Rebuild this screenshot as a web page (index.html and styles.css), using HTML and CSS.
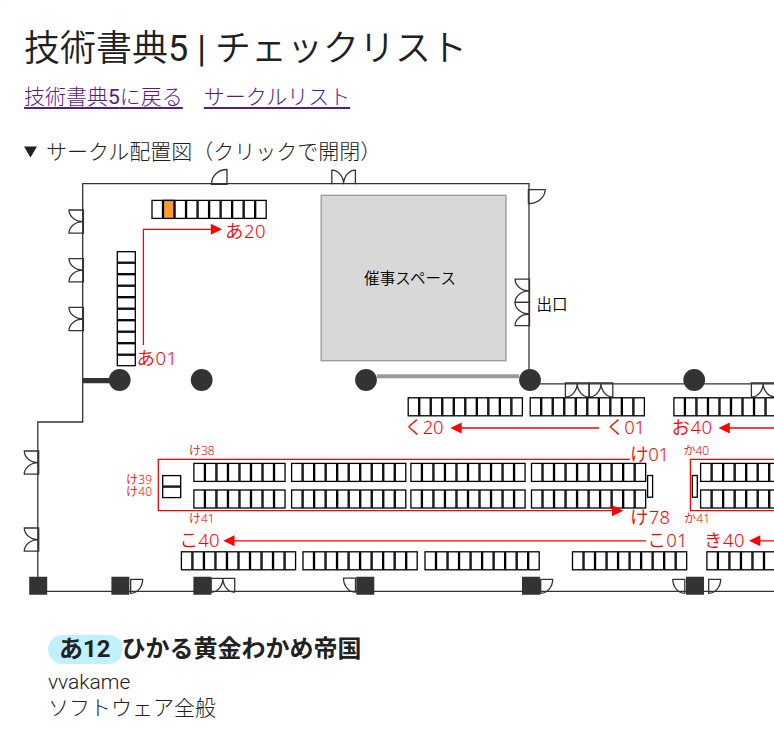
FILE: index.html
```
<!DOCTYPE html>
<html lang="ja">
<head>
<meta charset="utf-8">
<title>技術書典5 | チェックリスト</title>
<link rel="stylesheet" href="styles.css">
</head>
<body>
<main class="card">
<h1 class="title"><span class="demi">技術書典</span>5 | <span class="demi">チェックリスト</span></h1>
<nav class="links"><a href="#back"><span class="thin">技術書典</span>5<span class="thin">に戻る</span></a><a class="thin" href="#list">サークルリスト</a></nav>
<details class="map" open>
<summary><svg class="marker" viewBox="0 0 14 12"><path d="M0 0H14L7 12Z"/></svg><span class="thin">サークル配置図（クリックで開閉）</span></summary>
<svg class="plan" viewBox="0 165 774 435" width="774" height="435">
<defs>
<rect id="c" width="10.5" height="18"/>
<g id="r8"><use href="#c"/><use href="#c" x="11.52"/><use href="#c" x="23.04"/><use href="#c" x="34.56"/><use href="#c" x="46.08"/><use href="#c" x="57.6"/><use href="#c" x="69.12"/><use href="#c" x="80.64"/></g>
<g id="r"><use href="#r8"/><use href="#c" x="92.16"/><use href="#c" x="103.68"/></g>
<rect id="h" width="18" height="10.5"/>
<g id="sideDoor"><path d="M14.4 0H0A14.2 11.6 0 0 0 14.2 11.6A14.2 11.6 0 0 0 0 23.2H14.4Z"/></g>
<path id="hangDoor" d="M0 14V0H23.6V14M11.8 0A11.8 14 0 0 1 0 14M11.8 0A11.8 14 0 0 0 23.6 14"/>
<path id="doorR" d="M0 0H12A12 14 0 0 1 0 14Z"/>
<path id="doorL" d="M12 0H0A12 14 0 0 0 12 14Z"/>
</defs>
<rect class="stage" x="321.2" y="195.3" width="184.8" height="165.4"/>
<g class="wall">
<path d="M529 380V183.7H82.7V422H37.8V591.3H780M530 383.8H780"/>
<use href="#sideDoor" x="69" y="210"/><use href="#sideDoor" x="69" y="258.6"/><use href="#sideDoor" x="69" y="307.4"/>
<use href="#sideDoor" x="24.3" y="451"/><use href="#sideDoor" x="24.3" y="528"/>
<use href="#sideDoor" x="515.1" y="279.2"/><use href="#sideDoor" x="515.1" y="302.4"/>
<path d="M211.5 184.3A15.4 14.6 0 0 1 227 169.5V184.3ZM331.8 184.3V170.2A11.8 14 0 0 1 343.6 184.2A11.8 14 0 0 1 355.4 170.2V184.3M528.4 189.6H545.2A16.8 14 0 0 1 528.4 203.6Z"/>
<use href="#hangDoor" x="565.4" y="383"/><use href="#hangDoor" x="589.2" y="383"/><use href="#hangDoor" x="751.4" y="383"/>
<use href="#hangDoor" x="211.1" y="578.3"/>
<use href="#doorR" x="130.7" y="579.3"/><use href="#doorR" x="540.7" y="579.3"/><use href="#doorR" x="708.7" y="579.3"/>
<use href="#doorL" x="343.5" y="578.2"/><use href="#doorL" x="672.8" y="579.3"/>
</g>
<path class="partition" d="M377 376.2H519"/>
<g class="pillar">
<path d="M83 378H112V383.3H83ZM29.2 576.8h18v18h-18zM111.4 576.8h18v18h-18zM193.4 576.8h18v18h-18zM356.3 576.8h18v18h-18zM522 576.8h18v18h-18zM686 576.8h18v18h-18z"/>
<circle cx="119.7" cy="380" r="10.9"/><circle cx="201.7" cy="380" r="10.9"/><circle cx="366" cy="380" r="10.9"/><circle cx="530" cy="380" r="10.9"/><circle cx="694.2" cy="380" r="10.9"/>
</g>
<g class="booth">
<use href="#r" x="152" y="200.4"/><use class="hit" href="#c" x="163.5" y="200.4"/>
<use href="#h" x="117.3" y="251.7"/><use href="#h" x="117.3" y="263.2"/><use href="#h" x="117.3" y="274.7"/><use href="#h" x="117.3" y="286.2"/><use href="#h" x="117.3" y="297.7"/><use href="#h" x="117.3" y="309.2"/><use href="#h" x="117.3" y="320.7"/><use href="#h" x="117.3" y="332.2"/><use href="#h" x="117.3" y="343.7"/><use href="#h" x="117.3" y="355.2"/>
<use href="#r" x="408.2" y="397.8"/><use href="#r" x="530.2" y="397.8"/><use href="#r" x="673.9" y="397.8"/>
<use href="#r8" x="193.9" y="463.4"/><use href="#r" x="291.6" y="463.4"/><use href="#r" x="410.9" y="463.4"/><use href="#r" x="531.5" y="463.4"/><use href="#r" x="700.6" y="463.4"/>
<use href="#r8" x="193.9" y="490"/><use href="#r" x="291.6" y="490"/><use href="#r" x="410.9" y="490"/><use href="#r" x="531.5" y="490"/><use href="#r" x="700.6" y="490"/>
<use href="#h" x="162.7" y="475.6"/><use href="#h" x="162.7" y="487.1"/>
<rect x="647.6" y="475.5" width="5" height="21.7"/><rect x="692.3" y="475.5" width="5" height="21.7"/>
<use href="#r" x="181.4" y="551.8"/><use href="#r" x="303" y="551.8"/><use href="#r" x="425" y="551.8"/><use href="#r" x="572.5" y="551.8"/><use href="#r" x="706.9" y="551.8"/>
</g>
<path class="route" d="M143.4 345V229.3H212M461 428H599M729 428H780M630 459.3H158.3V510.7H613M780 459.3H690.4V510.7H780M234 540.8H646M760 540.8H780"/>
<path class="head" d="M210.8 223.8V234.8L222 229.3ZM461.7 422.5V433.5L450.4 428ZM729.8 422.5V433.5L718.5 428ZM612 505.2V516.2L623.4 510.7ZM234.5 535.3V546.3L223.2 540.8ZM760.3 535.3V546.3L749 540.8Z"/>
<g class="label">
<text x="225" y="238" textLength="40.5">あ20</text>
<text x="136.5" y="365" textLength="40.5">あ01</text>
<text x="404.5" y="434" textLength="39">く20</text>
<text x="606" y="434" textLength="39">く01</text>
<text x="671.5" y="434" textLength="40.5">お40</text>
<text x="630" y="461" textLength="39">け01</text>
<text x="630" y="524" textLength="40">け78</text>
<text x="179.5" y="547" textLength="40">こ40</text>
<text x="647.5" y="547" textLength="40">こ01</text>
<text x="704" y="547" textLength="40.5">き40</text>
</g>
<g class="label small">
<text x="189" y="455" textLength="25.5">け38</text><text x="126" y="484" textLength="26">け39</text><text x="126" y="496" textLength="26">け40</text><text x="189" y="523" textLength="25.5">け41</text>
<text x="683.5" y="455" textLength="25.5">か40</text><text x="684" y="523" textLength="26">か41</text>
</g>
<g class="note"><text x="364" y="283.5" textLength="92">催事スペース</text><text x="536.5" y="309.5" textLength="31">出口</text></g>
</svg>
</details>
<section class="circle">
<h2><span class="badge">あ12</span>ひかる黄金わかめ帝国</h2>
<p class="author">vvakame</p>
<p class="thin">ソフトウェア全般</p>
</section>
</main>
</body>
</html>
```
FILE: styles.css
```
body {
  margin: 0;
  background: #f5f5f5;
  color: #212121;
  font: 21px/26px Roboto, "Noto Sans CJK JP", sans-serif;
  overflow: hidden;
}
.card {
  box-sizing: border-box;
  min-height: 742px;
  padding: 25px 0 0 24px;
  background: #fff;
  border-top-left-radius: 4px;
}
.thin { font-weight: 300; }
.demi { font-weight: 350; }
.author { font-weight: 350; }
.title {
  margin: 0;
  font-size: 36px;
  line-height: 48px;
  font-weight: 400;
  white-space: nowrap;
}
.links {
  display: flex;
  gap: 21px;
  margin-top: 11px;
}
.links a {
  color: #551a8b;
  text-decoration-thickness: 2px;
  text-underline-offset: 3px;
}
.map { margin-top: 29px; }
.map summary {
  display: flex;
  align-items: center;
  gap: 9px;
  height: 26px;
  list-style: none;
  white-space: nowrap;
}
.marker { width: 13px; height: 12px; fill: #212121; }
.plan { display: block; margin-left: -24px; }
.stage { fill: #d8d8d8; stroke: #999; stroke-width: 1.3; }
.wall { fill: none; stroke: #333; stroke-width: 1.3; }
.partition { stroke: #999; stroke-width: 4; }
.pillar { fill: #333; }
.booth { fill: #fff; stroke: #000; stroke-width: 1.3; }
.booth .hit { fill: #ff9933; }
.route { fill: none; stroke: #f00; stroke-width: 1.3; }
.head { fill: #f00; }
.label {
  fill: #f00;
  font: 350 18.5px "Noto Sans", "Noto Sans CJK JP", sans-serif;
}
.small { font-size: 12px; }
.note { fill: #000; font: 350 15.5px "Noto Sans CJK JP", sans-serif; }
.circle { margin: 35px 0 0 24px; }
.circle h2 {
  display: flex;
  align-items: center;
  margin: 0 0 5px;
  font-size: 24px;
  line-height: 29px;
  font-weight: 700;
}
.badge {
  margin-right: -1px;
  padding: 0 12px 0 11px;
  border-radius: 15px;
  background: #c1f1ff;
}
.circle p { margin: 0; }
```
